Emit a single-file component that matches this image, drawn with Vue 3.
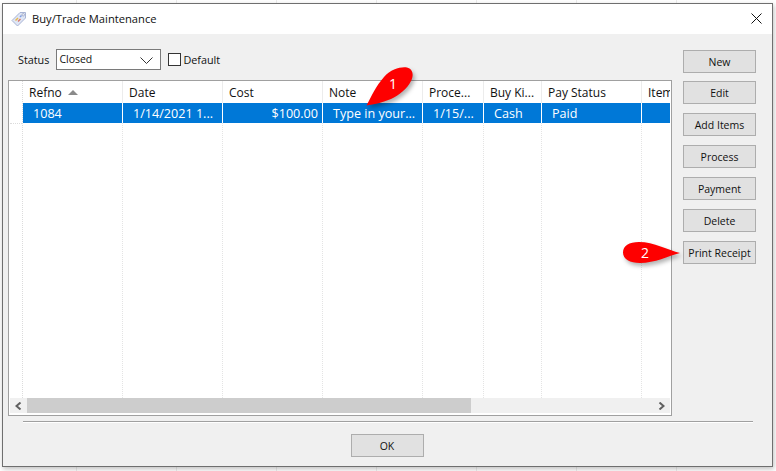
<script setup>
const columns = [
  { name: 'Refno', value: '1084', width: 100, sort: true },
  { name: 'Date', value: '1/14/2021 1...', width: 100 },
  { name: 'Cost', value: '$100.00', width: 100, right: true },
  { name: 'Note', value: 'Type in your...', width: 100 },
  { name: 'Proce...', value: '1/15/...', width: 61 },
  { name: 'Buy Ki...', value: 'Cash', width: 58 },
  { name: 'Pay Status', value: 'Paid', width: 100 },
  { name: 'Item', value: '', width: 29, last: true }
]
const actions = ['New', 'Edit', 'Add Items', 'Process', 'Payment', 'Delete', 'Print Receipt']
</script>

<template>
  <div class="page">
    <div class="window">
      <header class="titlebar">
        <svg class="tag" width="16" height="16" viewBox="0 0 16 16">
          <path d="M1 9.5 9 1.5 14.5 1.5 14.5 7 6.5 15Z" fill="#dfe6f5" stroke="#a9b4d4" />
          <path d="M4.500 9.500 7 7" stroke="#e8b64a" stroke-width="1.500" />
          <path d="M7 10.500 9.500 8" stroke="#d9776a" stroke-width="1.500" />
          <path d="M9 6 10.500 4.500" stroke="#7f9be0" stroke-width="1.500" />
          <circle cx="12.200" cy="3.800" r="1.200" fill="#fff" stroke="#8a94b8" stroke-width=".7" />
        </svg>
        <span class="title">Buy/Trade Maintenance</span>
        <svg class="close" width="11" height="11" viewBox="0 0 11 11">
          <path d="M.5.5 10.5 10.5M10.5.5.5 10.5" stroke="#111" stroke-width="1" />
        </svg>
      </header>
      <div class="body">
        <div class="content">
          <main class="left">
            <div class="filters">
              <span class="label">Status</span>
              <div class="select">
                <span>Closed</span>
                <svg width="13" height="7" viewBox="0 0 13 7"><path d="M.5.5 6.500 6.500 12.500.5" fill="none" stroke="#333" /></svg>
              </div>
              <div class="check"></div>
              <span class="label">Default</span>
            </div>
            <div class="table">
              <div class="grid">
                <div class="gutter">
                  <div class="g-head"></div>
                  <div class="g-row"></div>
                  <div class="g-fill"></div>
                </div>
                <div v-for="c in columns" :key="c.name" class="col" :class="{ last: c.last }" :style="{ width: c.width + 'px' }">
                  <div class="head">
                    <span>{{ c.name }}</span>
                    <svg v-if="c.sort" class="sort" width="10" height="5" viewBox="0 0 10 5"><path d="M5 0 10 5H0Z" fill="#8a8a8a" /></svg>
                  </div>
                  <div class="cell" :class="{ right: c.right }">{{ c.value }}</div>
                  <div class="fill"></div>
                </div>
              </div>
              <div class="hscroll">
                <div class="arrow">
                  <svg width="7" height="8" viewBox="0 0 7 8"><path d="M5.500.5 1.500 4 5.500 7.500" fill="none" stroke="#606060" stroke-width="2" /></svg>
                </div>
                <div class="thumb"></div>
                <div class="track"></div>
                <div class="arrow">
                  <svg width="7" height="8" viewBox="0 0 7 8"><path d="M1.500.5 5.500 4 1.500 7.500" fill="none" stroke="#606060" stroke-width="2" /></svg>
                </div>
              </div>
            </div>
          </main>
          <aside class="actions">
            <button v-for="a in actions" :key="a" class="btn">{{ a }}</button>
          </aside>
        </div>
        <div class="separator"></div>
        <div class="footer"><button class="btn">OK</button></div>
      </div>
    </div>

    <div class="callout one">
      <svg width="48" height="40" viewBox="0 0 48 40">
        <path d="M.5 39.500C6 29 10 20 18 11 25 3 35 .5 41 1.500 47 3 48 9 45 15 41 23 33 29 25 33 17 36.500 8 38.500.5 39.500Z" fill="#fe0000" />
      </svg>
      <span>1</span>
    </div>
    <div class="callout two">
      <svg width="60" height="24" viewBox="0 0 60 24">
        <path d="M58 12C46 9 32 1 17 1 7 1 1 5 1 11.500 1 18 8 22 18 22 33 22 46 15 58 12Z" fill="#fe0000" />
      </svg>
      <span>2</span>
    </div>
  </div>
</template>

<style scoped>
.page {
  position: relative;
  width: 776px;
  height: 471px;
  padding: 3px 3px 4px 2px;
  box-sizing: border-box;
  background-color: #fff;
  background-image: linear-gradient(90deg, #ececec 1px, transparent 1px);
  background-size: 100px 100%;
  background-position: 76px 0;
  font-family: "Open Sans", "Noto Sans", sans-serif;
  font-size: 12px;
  color: #111;
  overflow: hidden;
}
.window {
  height: 100%;
  box-sizing: border-box;
  border: 1px solid #6f6f6f;
  display: flex;
  flex-direction: column;
  box-shadow: 1px 2px 5px rgba(0, 0, 0, 0.25);
}
.titlebar {
  height: 30px;
  box-sizing: border-box;
  background: #fff;
  display: flex;
  align-items: center;
  padding: 0 10px 0 8px;
  flex: none;
}
.tag { flex: none; }
.title { margin: 0 0 2px 5px; font-size: 11.200px; }
.close { margin: 0 0 2px auto; }
.body {
  flex: 1;
  min-height: 0;
  display: flex;
  flex-direction: column;
  background: #f0f0f0;
}
.content {
  display: flex;
  padding: 16px 16px 0 5px;
  justify-content: space-between;
}
.left {
  width: 664px;
}
.filters {
  height: 21px;
  margin: -1px 0 0 0;
  padding-left: 10px;
  display: flex;
  align-items: center;
}
.label { line-height: 16px; font-size: 10.800px; }
.select {
  width: 105px;
  height: 21px;
  box-sizing: border-box;
  margin-left: 7px;
  border: 1px solid #7a7a7a;
  background: #fff;
  display: flex;
  align-items: center;
  justify-content: space-between;
  padding: 0 7px 2px 2px;
  font-size: 10.500px;
}
.select svg { margin-top: 3px; }
.check {
  width: 13px;
  height: 13px;
  box-sizing: border-box;
  margin: 0 2px 0 7px;
  border: 1px solid #333;
  background: #fff;
}
.table {
  margin-top: 10px;
  width: 664px;
  height: 336px;
  box-sizing: border-box;
  border: 1px solid #a0a0a0;
  background: #fff;
  padding: 0 1px 2px 1px;
  display: flex;
  flex-direction: column;
}
.grid {
  flex: 1;
  display: flex;
  min-height: 0;
  overflow: hidden;
}
.gutter {
  width: 12px;
  flex: none;
  display: flex;
  flex-direction: column;
  border-right: 1px dotted #dcdcdc;
}
.g-head { height: 22px; }
.g-row { height: 20px; border-bottom: 1px dotted #dcdcdc; }
.g-fill { flex: 1; }
.col {
  flex: none;
  display: flex;
  flex-direction: column;
  box-sizing: border-box;
  overflow: hidden;
}
.head {
  height: 22px;
  flex: none;
  box-sizing: border-box;
  padding-left: 6px;
  display: flex;
  align-items: center;
  gap: 6px;
  border-right: 1px solid #ececec;
  white-space: nowrap;
  overflow: hidden;
}
.sort { flex: none; }
.cell {
  height: 20px;
  flex: none;
  box-sizing: border-box;
  background: #0078d7;
  color: #fff;
  border-right: 1px solid #fff;
  padding: 0 4px 0 10px;
  font-size: 12.600px;
  line-height: 21px;
  white-space: nowrap;
  overflow: hidden;
}
.cell.right { text-align: right; }
.col.last .cell,
.col.last .head { border-right: 0; }
.fill {
  flex: 1;
  border-right: 1px dotted #e4e4e4;
}
.col.last .fill { border-right: 0; }
.hscroll {
  height: 15px;
  flex: none;
  display: flex;
  background: #f0f0f0;
}
.arrow {
  width: 17px;
  flex: none;
  display: flex;
  align-items: center;
  justify-content: center;
}
.thumb {
  width: 444px;
  background: #cdcdcd;
  flex: none;
}
.track { flex: 1; }
.actions {
  width: 73px;
  display: flex;
  flex-direction: column;
  gap: 9px;
  flex: none;
}
.actions .btn:first-child { margin-bottom: -1px; }
.btn {
  width: 73px;
  height: 23px;
  padding: 0;
  box-sizing: border-box;
  border: 1px solid #adadad;
  background: #e1e1e1;
  color: #111;
  font: inherit;
  font-size: 10.500px;
  white-space: nowrap;
  flex: none;
}
.separator {
  height: 1px;
  margin: 5px 19px 0 20px;
  background: #a0a0a0;
  border-bottom: 1px solid #fff;
  flex: none;
}
.footer {
  display: flex;
  justify-content: center;
  margin-top: 11px;
  padding-right: 1px;
}
.callout {
  position: absolute;
}
.callout svg {
  display: block;
  filter: drop-shadow(2px 3px 2px rgba(0, 0, 0, 0.3));
  overflow: visible;
}
.callout span {
  position: absolute;
  color: #fff;
  font-size: 14px;
  font-weight: 500;
  line-height: 16px;
}
.one { left: 366px; top: 66px; }
.one span { left: 23px; top: 10px; }
.two { left: 622px; top: 241px; }
.two span { left: 19px; top: 4px; }
</style>
